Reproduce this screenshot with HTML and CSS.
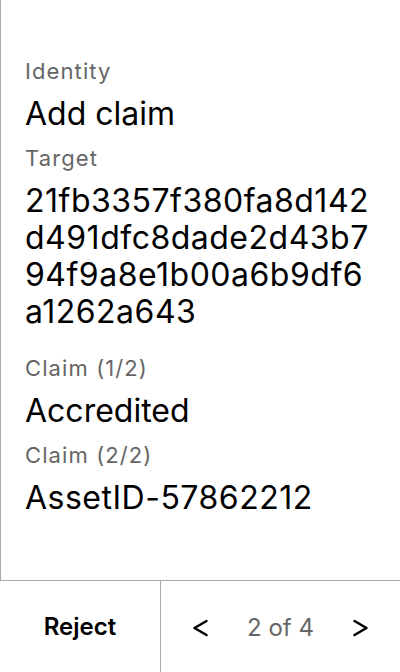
FILE: index.html
```html
<!DOCTYPE html>
<html lang="en">
<head>
<meta charset="utf-8">
<title>Add claim</title>
<link rel="stylesheet" href="styles.css">
</head>
<body>
<div class="screen">
  <main class="content">
    <div class="field">
      <div class="label">Identity</div>
      <div class="value">Add claim</div>
    </div>
    <div class="field">
      <div class="label">Target</div>
      <div class="value value--code value--hash">21fb3357f380fa8d142d491dfc8dade2d43b794f9a8e1b00a6b9df6a1262a643</div>
    </div>
    <div class="field">
      <div class="label">Claim (1/2)</div>
      <div class="value">Accredited</div>
    </div>
    <div class="field">
      <div class="label">Claim (2/2)</div>
      <div class="value value--code">AssetID-57862212</div>
    </div>
  </main>
  <footer class="actions">
    <button class="reject" type="button">Reject</button>
    <div class="pager">
      <button class="nav" type="button" aria-label="Previous">
        <svg width="24" height="24" viewBox="0 0 24 24"><path d="M18.5 5 L6.5 12 L18.5 19" fill="none" stroke="#000" stroke-width="2.5" stroke-linecap="round" stroke-linejoin="round"/></svg>
      </button>
      <span class="count">2 of 4</span>
      <button class="nav" type="button" aria-label="Next">
        <svg width="24" height="24" viewBox="0 0 24 24"><path d="M5.5 5 L17.5 12 L5.5 19" fill="none" stroke="#000" stroke-width="2.5" stroke-linecap="round" stroke-linejoin="round"/></svg>
      </button>
    </div>
  </footer>
</div>
</body>
</html>
```

FILE: styles.css
```css
* { box-sizing: border-box; }

html, body {
  margin: 0;
  padding: 0;
  background: #fff;
}

body {
  font-family: Inter, "Noto Sans", sans-serif;
  color: #000;
}

.screen {
  width: 400px;
  height: 672px;
  display: flex;
  flex-direction: column;
}

.content {
  flex: 1;
  border-left: 1px solid #a9a9a9;
  padding: 58px 24px 0 24px;
  display: flex;
  flex-direction: column;
  gap: 13px;
}

.field {
  display: flex;
  flex-direction: column;
  gap: 11px;
}

.label {
  font-size: 22px;
  line-height: 26px;
  letter-spacing: 1.1px;
  color: #666;
}

.value {
  font-size: 32px;
  line-height: 37px;
  color: #000;
}

.value--code {
  letter-spacing: 0.5px;
}

.value--hash {
  word-break: break-all;
  padding-bottom: 12px;
}

.actions {
  height: 92px;
  border-top: 1px solid #a9a9a9;
  display: flex;
}

.reject {
  width: 161px;
  border: none;
  border-right: 1px solid #a9a9a9;
  background: none;
  font-family: inherit;
  font-size: 24px;
  font-weight: 600;
  color: #000;
  padding: 0;
}

.pager {
  flex: 1;
  display: flex;
  align-items: center;
  justify-content: space-between;
  padding: 2px 27px 0 27px;
}

.nav {
  border: none;
  background: none;
  padding: 0;
  width: 24px;
  height: 24px;
  display: flex;
}

.count {
  font-size: 24px;
  color: #666;
}
```
